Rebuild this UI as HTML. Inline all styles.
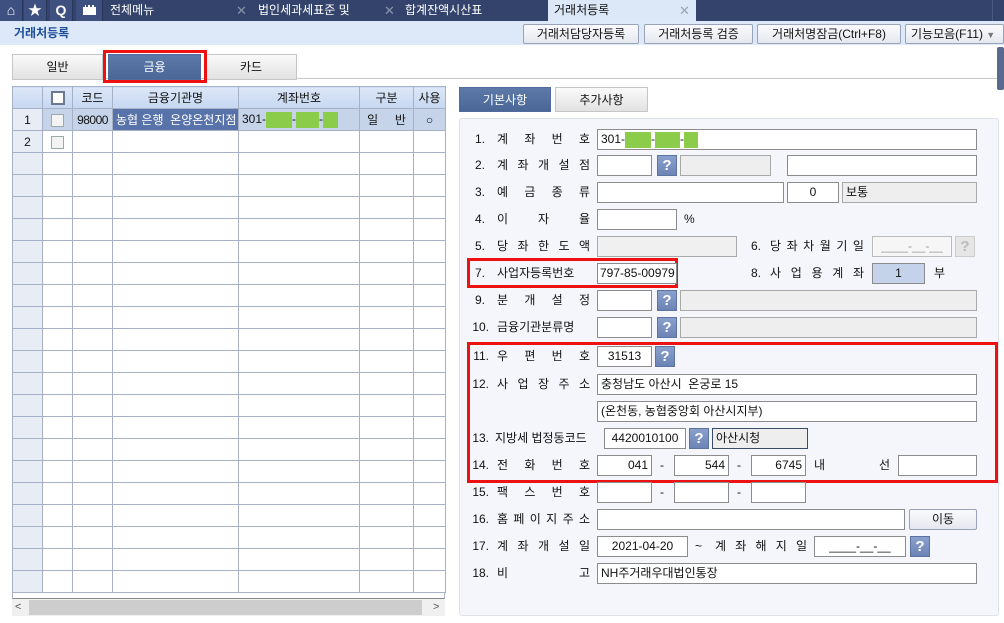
<!DOCTYPE html>
<html><head><meta charset="utf-8"><style>
*{box-sizing:border-box;margin:0;padding:0}
body{width:1004px;height:623px;overflow:hidden;background:#fff;font-family:"Liberation Sans","Noto Sans CJK KR","NanumGothic",sans-serif;font-size:12px;color:#111;position:relative}
.a{position:absolute}
.top{left:0;top:0;width:1004px;height:21px;background:#33436b}
.ib{top:0;height:21px;width:23px;background:#3e5080;border-right:1px solid #2a3658;color:#fff;text-align:center;font-weight:bold;font-size:14px;line-height:21px}
.tt{top:0;color:#fff;font-size:12px;line-height:21px}
.x{color:#8a93ab;font-size:13px}
.bar2{left:0;top:21px;width:1004px;height:24px;background:#dde8f8}
.btn{top:24px;height:20px;border:1px solid #9aa4b8;border-radius:2px;background:linear-gradient(#fafbfd,#e4e8ee);text-align:center;line-height:18px;font-size:12px}
.tab{height:26px;border:1px solid #c6c6c6;background:linear-gradient(#fafafa,#e2e2e2);text-align:center;line-height:24px;font-size:12px}
.tabs{border:1px solid #4f6c9c;background:linear-gradient(#5c79a8,#4a6797);color:#fff}
table{border-collapse:collapse;table-layout:fixed}
td{border:1px solid #a6b0c6;height:22px;font-size:12px;text-align:center;padding:0;overflow:hidden;white-space:nowrap}
.h td{background:linear-gradient(#dce7f8,#c6d7f0)}
td.n{background:#e8ecf4}
.cb{display:inline-block;width:13px;height:13px;border:1px solid #9aa;background:#f3f3f3;vertical-align:middle}
.lb{font-size:12px;line-height:20px;height:20px}
.num{position:absolute;width:22px;text-align:right}
.sp{position:absolute;display:flex;justify-content:space-between}
.in{position:absolute;height:21px;border:1px solid #8c8c8c;background:#fff;line-height:19px;padding:0 3px;font-size:12px;white-space:nowrap;overflow:hidden}
.g{background:#eeeeee;border-color:#a9a9a9}
.q{position:absolute;width:20px;height:21px;background:linear-gradient(#8aa0cc,#6c84b6);border:1px solid #5d74a3;color:#fff;font-weight:bold;text-align:center;line-height:19px;font-size:15px}
.gr{display:inline-block;background:#8bcc4a;height:16px;vertical-align:middle}
.red{position:absolute;border:3px solid #ee1111}
</style></head><body>
<div class="a top"></div>
<div class="a ib" style="left:0">&#8962;</div>
<div class="a ib" style="left:24px">★</div>
<div class="a ib" style="left:50px">Q</div>
<div class="a ib" style="left:76px;width:27px"><span style="display:inline-block;width:13px;height:10px;background:#fff;margin-top:5px;vertical-align:top;border-top:2px dotted #3e5080"></span></div>
<div class="a tt" style="left:110px">전체메뉴</div>
<div class="a tt x" style="left:236px">✕</div>
<div class="a tt" style="left:258px">법인세과세표준 및</div>
<div class="a tt x" style="left:384px">✕</div>
<div class="a tt" style="left:405px">합계잔액시산표</div>
<div class="a" style="left:548px;top:0;width:148px;height:21px;background:#dce8f7"></div>
<div class="a tt" style="left:554px;color:#111">거래처등록</div>
<div class="a tt" style="left:679px;color:#9aa2b2;font-size:13px">✕</div>
<div class="a" style="left:992px;top:0;width:12px;height:21px;border-left:1px solid #4a5a80"></div>
<div class="a bar2"></div>
<div class="a" style="left:14px;top:24px;font-weight:bold;color:#1f4f9a;font-size:12px;line-height:18px">거래처등록</div>
<div class="a btn" style="left:523px;width:116px">거래처담당자등록</div>
<div class="a btn" style="left:644px;width:109px">거래처등록 검증</div>
<div class="a btn" style="left:757px;width:144px">거래처명잠금(Ctrl+F8)</div>
<div class="a btn" style="left:905px;width:99px;text-align:left;padding-left:5px">기능모음(F11) <span style="color:#777;font-size:9px">▼</span></div>
<div class="a" style="left:997px;top:47px;width:7px;height:43px;background:#5a6a8c;border-radius:2px"></div>
<div class="a" style="left:12px;top:78px;width:985px;height:1px;background:#c8c8c8"></div>
<div class="a tab" style="left:12px;top:54px;width:91px">일반</div>
<div class="a tab tabs" style="left:108px;top:54px;width:93px">금융</div>
<div class="a tab" style="left:205px;top:54px;width:92px">카드</div>
<div class="red" style="left:103px;top:50px;width:104px;height:33px"></div>
<table class="a" style="left:12px;top:86px;width:433px">
<colgroup><col style="width:30px"><col style="width:30px"><col style="width:40px"><col style="width:126px"><col style="width:121px"><col style="width:54px"><col style="width:32px"></colgroup>
<tr class="h"><td></td><td><span class="cb" style="border:2px solid #6a7890;background:#fff;width:14px;height:14px"></span></td><td>코드</td><td>금융기관명</td><td>계좌번호</td><td>구분</td><td>사용</td></tr>
<tr style="background:#c6d4ea"><td class="n">1</td><td><span class="cb"></span></td><td style="letter-spacing:-.5px">98000</td><td style="background:#5873a9;color:#fff;text-align:left;padding-left:3px">농협 은행 &nbsp;온양온천지점</td><td style="text-align:left;padding-left:3px">301-<span class="gr" style="width:26px"></span>-<span class="gr" style="width:23px"></span>-<span class="gr" style="width:15px"></span></td><td>일 &nbsp; &nbsp; 반</td><td>○</td></tr>
<tr><td class="n">2</td><td><span class="cb"></span></td><td></td><td></td><td></td><td></td><td></td></tr>
<tr><td class="n"></td><td></td><td></td><td></td><td></td><td></td><td></td></tr>
<tr><td class="n"></td><td></td><td></td><td></td><td></td><td></td><td></td></tr>
<tr><td class="n"></td><td></td><td></td><td></td><td></td><td></td><td></td></tr>
<tr><td class="n"></td><td></td><td></td><td></td><td></td><td></td><td></td></tr>
<tr><td class="n"></td><td></td><td></td><td></td><td></td><td></td><td></td></tr>
<tr><td class="n"></td><td></td><td></td><td></td><td></td><td></td><td></td></tr>
<tr><td class="n"></td><td></td><td></td><td></td><td></td><td></td><td></td></tr>
<tr><td class="n"></td><td></td><td></td><td></td><td></td><td></td><td></td></tr>
<tr><td class="n"></td><td></td><td></td><td></td><td></td><td></td><td></td></tr>
<tr><td class="n"></td><td></td><td></td><td></td><td></td><td></td><td></td></tr>
<tr><td class="n"></td><td></td><td></td><td></td><td></td><td></td><td></td></tr>
<tr><td class="n"></td><td></td><td></td><td></td><td></td><td></td><td></td></tr>
<tr><td class="n"></td><td></td><td></td><td></td><td></td><td></td><td></td></tr>
<tr><td class="n"></td><td></td><td></td><td></td><td></td><td></td><td></td></tr>
<tr><td class="n"></td><td></td><td></td><td></td><td></td><td></td><td></td></tr>
<tr><td class="n"></td><td></td><td></td><td></td><td></td><td></td><td></td></tr>
<tr><td class="n"></td><td></td><td></td><td></td><td></td><td></td><td></td></tr>
<tr><td class="n"></td><td></td><td></td><td></td><td></td><td></td><td></td></tr>
<tr><td class="n"></td><td></td><td></td><td></td><td></td><td></td><td></td></tr>
<tr><td class="n"></td><td></td><td></td><td></td><td></td><td></td><td></td></tr>
</table>
<div class="a" style="left:12px;top:592px;width:433px;height:7px;border:1px solid #a6b0c6;border-top:none;border-bottom:1px solid #888"></div>
<div class="a" style="left:12px;top:599px;width:433px;height:17px;background:#f0f0f0"></div>
<div class="a" style="left:29px;top:600px;width:393px;height:15px;background:#cdcdcd"></div>
<div class="a" style="left:15px;top:599px;font-size:11px;color:#555;line-height:17px">&lt;</div>
<div class="a" style="left:433px;top:599px;font-size:11px;color:#555;line-height:17px">&gt;</div>

<div class="a tab tabs" style="left:459px;top:87px;width:92px;height:25px">기본사항</div>
<div class="a tab" style="left:555px;top:87px;width:93px;height:25px">추가사항</div>
<div class="a" style="left:459px;top:118px;width:540px;height:498px;background:#f4f6fb;border:1px solid #dde2ea;border-radius:3px"></div>

<!-- labels -->
<div class="a lb" style="left:0;top:129px;width:1004px">
</div>
<div id="f"></div>
<!-- row helper drawn manually -->
<div class="num lb" style="left:463px;top:129px">1.</div><div class="sp lb" style="left:497px;top:129px;width:93px"><span>계</span><span>좌</span><span>번</span><span>호</span></div>
<div class="in" style="left:597px;top:129px;width:380px;padding-left:3px">301-<span class="gr" style="width:26px"></span>-<span class="gr" style="width:25px"></span>-<span class="gr" style="width:14px"></span></div>

<div class="num lb" style="left:463px;top:155px">2.</div><div class="sp lb" style="left:497px;top:155px;width:93px"><span>계</span><span>좌</span><span>개</span><span>설</span><span>점</span></div>
<div class="in" style="left:597px;top:155px;width:55px"></div><div class="q" style="left:657px;top:155px">?</div><div class="in g" style="left:680px;top:155px;width:91px"></div><div class="in" style="left:787px;top:155px;width:190px"></div>

<div class="num lb" style="left:463px;top:182px">3.</div><div class="sp lb" style="left:497px;top:182px;width:93px"><span>예</span><span>금</span><span>종</span><span>류</span></div>
<div class="in" style="left:597px;top:182px;width:187px"></div><div class="in" style="left:787px;top:182px;width:52px;text-align:center">0</div><div class="in g" style="left:842px;top:182px;width:135px">보통</div>

<div class="num lb" style="left:463px;top:209px">4.</div><div class="sp lb" style="left:497px;top:209px;width:93px"><span>이</span><span>자</span><span>율</span></div>
<div class="in" style="left:597px;top:209px;width:80px"></div><div class="a lb" style="left:684px;top:209px">%</div>

<div class="num lb" style="left:463px;top:236px">5.</div><div class="sp lb" style="left:497px;top:236px;width:93px"><span>당</span><span>좌</span><span>한</span><span>도</span><span>액</span></div>
<div class="in g" style="left:597px;top:236px;width:140px;background:#f0f0f0"></div>
<div class="a lb" style="left:751px;top:236px">6.</div><div class="sp lb" style="left:770px;top:236px;width:94px"><span>당</span><span>좌</span><span>차</span><span>월</span><span>기</span><span>일</span></div>
<div class="in" style="left:872px;top:236px;width:80px;border-color:#bbb;background:#f6f6f6;color:#999;text-align:center">____-__-__</div><div class="q" style="left:955px;top:236px;background:#e6e6e6;border-color:#ccc;color:#bbb">?</div>

<div class="red" style="left:467px;top:258px;width:211px;height:30px"></div>
<div class="num lb" style="left:463px;top:263px">7.</div><div class="a lb" style="left:497px;top:263px">사업자등록번호</div>
<div class="in" style="left:597px;top:263px;width:80px;padding:0 2px">797-85-00979</div>
<div class="a lb" style="left:751px;top:263px">8.</div><div class="sp lb" style="left:770px;top:263px;width:94px"><span>사</span><span>업</span><span>용</span><span>계</span><span>좌</span></div>
<div class="in" style="left:872px;top:263px;width:53px;background:#c4d2ea;text-align:center">1</div><div class="a lb" style="left:934px;top:263px">부</div>

<div class="num lb" style="left:463px;top:290px">9.</div><div class="sp lb" style="left:497px;top:290px;width:93px"><span>분</span><span>개</span><span>설</span><span>정</span></div>
<div class="in" style="left:597px;top:290px;width:55px"></div><div class="q" style="left:657px;top:290px">?</div><div class="in g" style="left:680px;top:290px;width:297px"></div>

<div class="num lb" style="left:467px;top:317px">10.</div><div class="a lb" style="left:497px;top:317px">금융기관분류명</div>
<div class="in" style="left:597px;top:317px;width:55px"></div><div class="q" style="left:657px;top:317px">?</div><div class="in g" style="left:680px;top:317px;width:297px"></div>

<div class="red" style="left:467px;top:342px;width:531px;height:141px"></div>
<div class="num lb" style="left:467px;top:346px">11.</div><div class="sp lb" style="left:497px;top:346px;width:93px"><span>우</span><span>편</span><span>번</span><span>호</span></div>
<div class="in" style="left:597px;top:346px;width:55px;text-align:center">31513</div><div class="q" style="left:655px;top:346px">?</div>

<div class="num lb" style="left:467px;top:374px">12.</div><div class="sp lb" style="left:497px;top:374px;width:93px"><span>사</span><span>업</span><span>장</span><span>주</span><span>소</span></div>
<div class="in" style="left:597px;top:374px;width:380px">충청남도 아산시 &nbsp;온궁로 15</div>
<div class="in" style="left:597px;top:401px;width:380px">(온천동, 농협중앙회 아산시지부)</div>

<div class="num lb" style="left:467px;top:428px">13.</div><div class="a lb" style="left:495px;top:428px">지방세 법정동코드</div>
<div class="in" style="left:604px;top:428px;width:82px;text-align:center">4420010100</div><div class="q" style="left:689px;top:428px">?</div><div class="in g" style="left:712px;top:428px;width:96px;border-color:#3b4c6b">아산시청</div>

<div class="num lb" style="left:467px;top:455px">14.</div><div class="sp lb" style="left:497px;top:455px;width:93px"><span>전</span><span>화</span><span>번</span><span>호</span></div>
<div class="in" style="left:597px;top:455px;width:55px;text-align:right">041</div><div class="a lb" style="left:660px;top:455px">-</div>
<div class="in" style="left:674px;top:455px;width:55px;text-align:right">544</div><div class="a lb" style="left:737px;top:455px">-</div>
<div class="in" style="left:751px;top:455px;width:55px;text-align:right">6745</div><div class="a lb" style="left:814px;top:455px">내</div><div class="a lb" style="left:879px;top:455px">선</div>
<div class="in" style="left:898px;top:455px;width:79px"></div>

<div class="num lb" style="left:467px;top:482px">15.</div><div class="sp lb" style="left:497px;top:482px;width:93px"><span>팩</span><span>스</span><span>번</span><span>호</span></div>
<div class="in" style="left:597px;top:482px;width:55px"></div><div class="a lb" style="left:660px;top:482px">-</div>
<div class="in" style="left:674px;top:482px;width:55px"></div><div class="a lb" style="left:737px;top:482px">-</div>
<div class="in" style="left:751px;top:482px;width:55px"></div>

<div class="num lb" style="left:467px;top:509px">16.</div><div class="sp lb" style="left:497px;top:509px;width:93px"><span>홈</span><span>페</span><span>이</span><span>지</span><span>주</span><span>소</span></div>
<div class="in" style="left:597px;top:509px;width:308px"></div>
<div class="a btn" style="left:909px;top:509px;width:68px;height:21px">이동</div>

<div class="num lb" style="left:467px;top:536px">17.</div><div class="sp lb" style="left:497px;top:536px;width:93px"><span>계</span><span>좌</span><span>개</span><span>설</span><span>일</span></div>
<div class="in" style="left:597px;top:536px;width:91px;text-align:center">2021-04-20</div>
<div class="a lb" style="left:695px;top:536px">~</div><div class="sp lb" style="left:715px;top:536px;width:92px"><span>계</span><span>좌</span><span>해</span><span>지</span><span>일</span></div>
<div class="in" style="left:814px;top:536px;width:92px;text-align:center">____-__-__</div><div class="q" style="left:910px;top:536px">?</div>

<div class="num lb" style="left:467px;top:563px">18.</div><div class="sp lb" style="left:497px;top:563px;width:93px"><span>비</span><span>고</span></div>
<div class="in" style="left:597px;top:563px;width:380px">NH주거래우대법인통장</div>
</body></html>
